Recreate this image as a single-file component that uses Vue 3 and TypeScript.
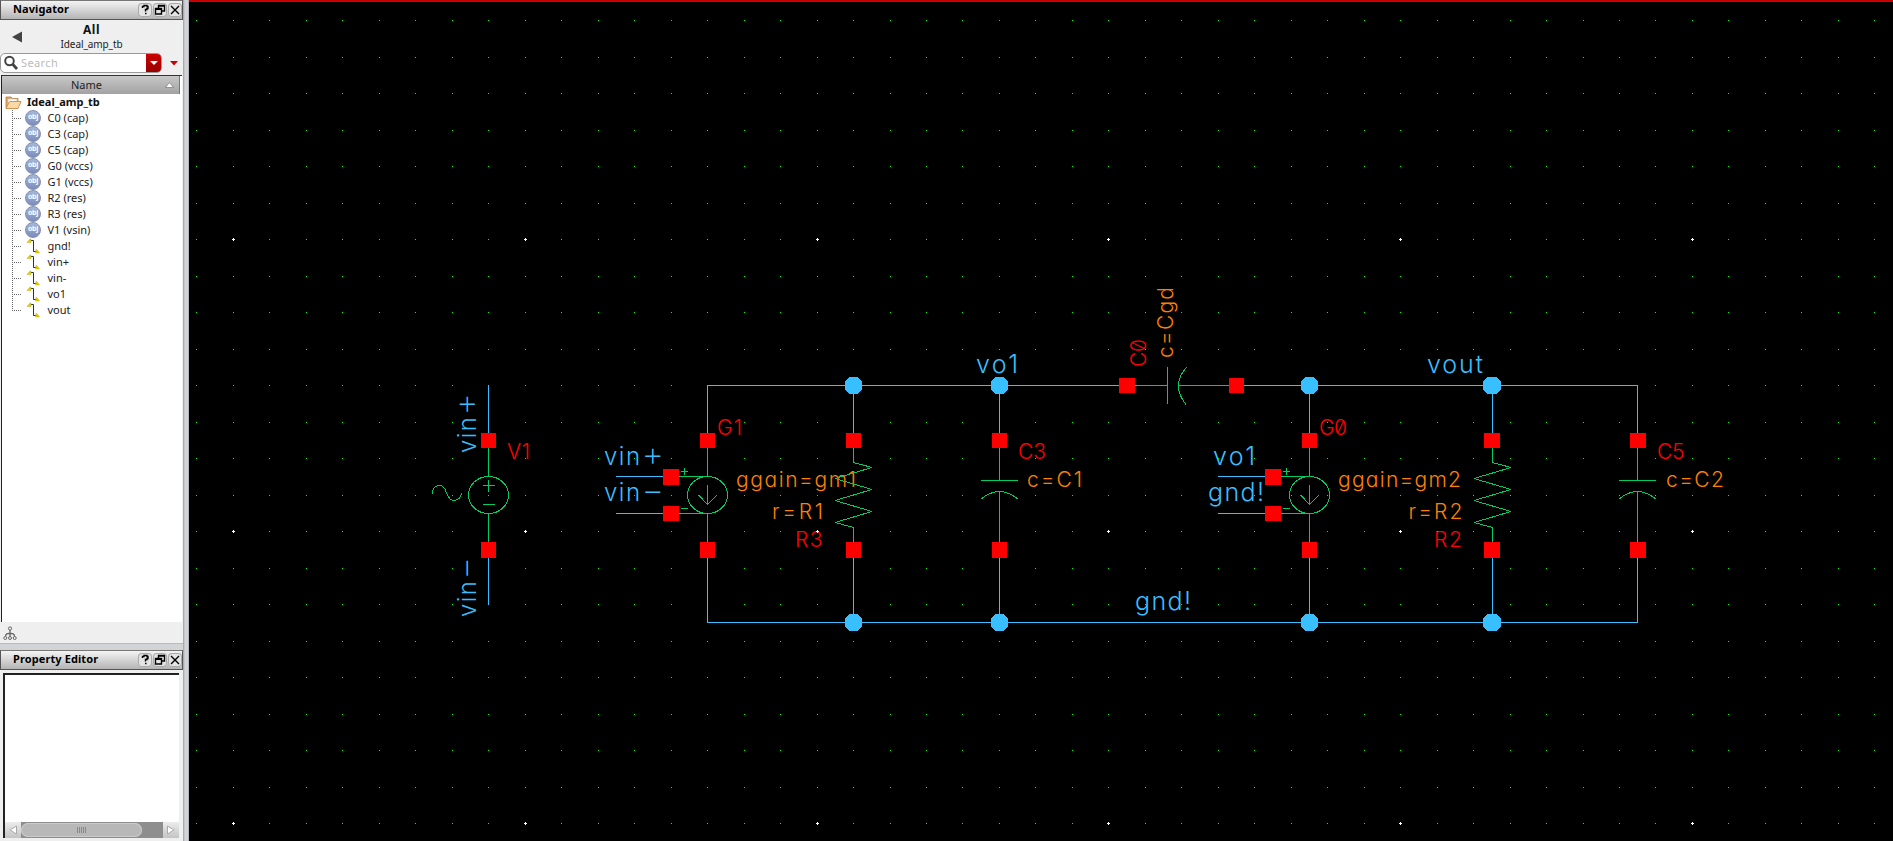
<script setup lang="ts">
type Kind = 'obj' | 'net'
interface Row { name: string; kind: Kind }
interface Label { t: string; x: number; y: number; w: number; c: string; s: number; r?: boolean; sign?: string }

const rows: Row[] = [
  { name: 'C0 (cap)', kind: 'obj' },
  { name: 'C3 (cap)', kind: 'obj' },
  { name: 'C5 (cap)', kind: 'obj' },
  { name: 'G0 (vccs)', kind: 'obj' },
  { name: 'G1 (vccs)', kind: 'obj' },
  { name: 'R2 (res)', kind: 'obj' },
  { name: 'R3 (res)', kind: 'obj' },
  { name: 'V1 (vsin)', kind: 'obj' },
  { name: 'gnd!', kind: 'net' },
  { name: 'vin+', kind: 'net' },
  { name: 'vin-', kind: 'net' },
  { name: 'vo1', kind: 'net' },
  { name: 'vout', kind: 'net' },
]

const dots: { x: number; y: number; major: boolean }[] = []
for (let i = -1; i <= 45; i++) {
  for (let j = 0; j <= 22; j++) {
    dots.push({
      x: Math.round(232.97 + 36.475 * i),
      y: 20 + Math.ceil(36.5 * j),
      major: i % 8 === 0 && (j + 2) % 8 === 0,
    })
  }
}

const labels: Label[] = [
  { t: 'vin', x: 476, y: 453, w: 36, c: 'net', s: 24, r: true, sign: '+' },
  { t: 'vin', x: 476, y: 617, w: 36, c: 'net', s: 24, r: true, sign: '−' },
  { t: 'V1', x: 507, y: 458.5, w: 23, c: 'inst', s: 21 },
  { t: 'vin', x: 604, y: 465, w: 36, c: 'net', s: 24, sign: '+' },
  { t: 'vin', x: 604, y: 501, w: 36, c: 'net', s: 24, sign: '−' },
  { t: 'G1', x: 717, y: 435, w: 25, c: 'inst', s: 21 },
  { t: 'ggain=gm1', x: 736, y: 486.5, w: 120, c: 'prop', s: 21 },
  { t: 'r=R1', x: 772, y: 519, w: 51, c: 'prop', s: 21 },
  { t: 'R3', x: 795, y: 547, w: 27.5, c: 'inst', s: 21 },
  { t: 'vo1', x: 976, y: 373, w: 42, c: 'net', s: 25 },
  { t: 'C0', x: 1146, y: 367, w: 28, c: 'inst', s: 21, r: true },
  { t: 'c=Cgd', x: 1173, y: 358, w: 71, c: 'prop', s: 21, r: true },
  { t: 'C3', x: 1018, y: 459, w: 28, c: 'inst', s: 21 },
  { t: 'c=C1', x: 1027, y: 486.5, w: 55, c: 'prop', s: 21 },
  { t: 'gnd!', x: 1135, y: 610, w: 56, c: 'net', s: 25 },
  { t: 'vo1', x: 1213, y: 465, w: 42, c: 'net', s: 25 },
  { t: 'gnd!', x: 1208, y: 501, w: 56, c: 'net', s: 25 },
  { t: 'G0', x: 1319, y: 435, w: 28, c: 'inst', s: 21 },
  { t: 'ggain=gm2', x: 1338, y: 486.5, w: 123, c: 'prop', s: 21 },
  { t: 'r=R2', x: 1408.5, y: 519, w: 54, c: 'prop', s: 21 },
  { t: 'R2', x: 1434, y: 547, w: 28, c: 'inst', s: 21 },
  { t: 'vout', x: 1427, y: 373, w: 56, c: 'net', s: 25 },
  { t: 'C5', x: 1657, y: 459, w: 27.5, c: 'inst', s: 21 },
  { t: 'c=C2', x: 1666, y: 486.5, w: 58, c: 'prop', s: 21 },
]

// [x, y, width, height] of every terminal
const pins: number[][] = [
  [481, 433, 15, 15], [481, 542, 15, 16],
  [700, 433, 15, 15], [700, 542, 15, 16], [663, 469, 16, 16], [663, 506, 16, 15],
  [846, 433, 15, 15], [846, 542, 15, 16],
  [992, 433, 15, 15], [992, 542, 15, 16],
  [1119, 378, 16, 15], [1229, 378, 15, 15],
  [1302, 433, 15, 15], [1302, 542, 15, 16], [1265, 469, 16, 16], [1265, 506, 16, 15],
  [1484, 433, 16, 15], [1484, 542, 16, 16],
  [1630, 433, 16, 15], [1630, 542, 16, 16],
]

const junctions: number[][] = [853.5, 999.5, 1309.5, 1492].flatMap((x) => [[x, 385.5], [x, 622.5]])
const octagon = (x: number, y: number): string => {
  const a = 8.7
  const b = 4
  return [[-b, -a], [b, -a], [a, -b], [a, b], [b, a], [-b, a], [-a, b], [-a, -b]]
    .map(([dx, dy]) => `${x + dx},${y + dy}`)
    .join(' ')
}
</script>

<template>
  <div class="app">
    <aside class="side">
      <section class="nav">
        <div class="title">
          <span class="caption">Navigator</span>
          <span class="btn"><svg width="14" height="14"><path d="M4.5 5V3.5H6V2.5H9V3.5H10V5.5H9V6.5H7.5V8.5M7 10.5H8.5" /></svg></span>
          <span class="btn"><svg width="14" height="14"><path d="M5.5 5V2.5H11.5V8H9M5 3H12" /><path d="M2.5 5.5H8.5V11H2.5ZM2 6.2H9" /></svg></span>
          <span class="btn"><svg width="14" height="14"><path d="M3 3L11 11M11 3L3 11" /></svg></span>
        </div>
        <div class="scope">
          <svg class="back" width="10" height="12"><path d="M0 6L10 0.5V11.5Z" fill="#444" /></svg>
          <div class="names"><b>All</b><span>Ideal_amp_tb</span></div>
        </div>
        <div class="searchline">
          <div class="search">
            <svg width="16" height="16" class="lens"><circle cx="6.5" cy="6" r="4.3" fill="none" stroke="#444" stroke-width="2" /><path d="M9.5 9L14 14" stroke="#444" stroke-width="2.8" /></svg>
            <span class="ph">Search</span>
            <span class="drop"><svg width="8" height="4"><path d="M0 0H8L4 4Z" fill="#fff" /></svg></span>
          </div>
          <svg class="filter" width="8" height="5"><path d="M0 0H8L4 4.5Z" fill="#c00" /></svg>
        </div>
        <div class="tree">
          <div class="head">
            <span>Name</span>
            <svg width="9" height="6"><path d="M0.5 5.5L4.5 0.5L8.5 5.5Z" fill="#fff" stroke="#777" stroke-width="0.7" /></svg>
          </div>
          <div class="root">
            <svg width="17" height="15">
              <path d="M1 13V2H6L7.5 3.5H13V6" fill="#e8a860" stroke="#b87830" stroke-width="0.8" />
              <path d="M3 4H12V9H3Z" fill="#fff" stroke="#bbb" stroke-width="0.6" />
              <path d="M1 13.5L4.5 6.5H16L13 13.5Z" fill="#fbd8a4" stroke="#c88a44" stroke-width="0.9" />
            </svg>
            <b>Ideal_amp_tb</b>
          </div>
          <div class="rows">
            <div v-for="r in rows" :key="r.name" class="row">
              <span class="stem"></span>
              <span v-if="r.kind === 'obj'" class="obj">obj</span>
              <svg v-else class="wireicon" width="16" height="16">
                <path d="M6 2.5H8.5V13.5H11" fill="none" stroke="#333" />
                <path d="M2 4.5L5 1H6V4.5ZM10.500 15L11 11.500H12L14.500 15Z" fill="#e6d000" stroke="#a89a20" stroke-width="0.4" />
              </svg>
              <span class="label">{{ r.name }}</span>
            </div>
          </div>
        </div>
        <div class="foot">
          <svg width="14" height="15" fill="#eee" stroke="#666">
            <path d="M7 4V11M2.500 10.500C2.500 7 5 7.500 7 7.500S11.500 7 11.500 10.500" fill="none" stroke-width="1.300" />
            <circle cx="7" cy="2.500" r="1.600" /><circle cx="2.300" cy="12" r="1.500" /><circle cx="7" cy="12" r="1.500" /><circle cx="11.700" cy="12" r="1.500" />
          </svg>
        </div>
      </section>
      <section class="props">
        <div class="title">
          <span class="caption">Property Editor</span>
          <span class="btn"><svg width="14" height="14"><path d="M4.5 5V3.5H6V2.5H9V3.5H10V5.5H9V6.5H7.5V8.5M7 10.5H8.5" /></svg></span>
          <span class="btn"><svg width="14" height="14"><path d="M5.5 5V2.5H11.5V8H9M5 3H12" /><path d="M2.5 5.5H8.5V11H2.5ZM2 6.2H9" /></svg></span>
          <span class="btn"><svg width="14" height="14"><path d="M3 3L11 11M11 3L3 11" /></svg></span>
        </div>
        <div class="sheet">
          <div class="scroll">
            <span class="arrow"><svg width="8" height="10"><path d="M7.500 1V9L1 5Z" /></svg></span>
            <span class="track"><span class="thumb"><i></i><i></i><i></i><i></i><i></i></span></span>
            <span class="arrow"><svg width="8" height="10"><path d="M0.500 1V9L7 5Z" /></svg></span>
          </div>
        </div>
      </section>
    </aside>
    <div class="sash"></div>
    <main class="canvas">
      <svg width="1704" height="839" viewBox="189 2 1704 839">
        <g v-for="(l, i) in labels" :key="i" :transform="l.r ? `rotate(-90 ${l.x} ${l.y})` : undefined">
          <text :class="['lbl', l.c]" :x="l.x" :y="l.y" :font-size="l.s" :textLength="l.w">{{ l.t }}</text>
          <text v-if="l.sign" :class="['lbl', l.c, 'sign']" :x="l.x + 37.4" :y="l.y + 1" font-size="35">{{ l.sign }}</text>
        </g>
        <g shape-rendering="crispEdges">
          <template v-for="(d, i) in dots" :key="i">
            <path v-if="d.major" :d="`M${d.x - 1} ${d.y + 0.5}h3M${d.x + 0.5} ${d.y - 1}v3`" stroke="#fff" />
            <rect v-else :x="d.x" :y="d.y" width="1" height="1" fill="#00ff00" />
          </template>
        </g>
        <g class="wire">
          <path d="M488.5 385V433M488.5 558V605" />
          <path d="M707.5 433V385.500H1119M1244 385.500H1637.500V433" />
          <path d="M707.5 558V622.500H1637.500V558" />
          <path d="M853.500 385V433M853.500 558V622M999.500 385V433M999.500 558V622M1309.500 385V433M1309.500 558V622M1492.500 385V433M1492.500 558V622" />
          <path d="M616 476.500H663M616 513.500H663M1218 476.500H1265M1218 513.500H1265" />
        </g>
        <g class="dev">
          <path d="M488.500 448V476M488.500 514V542M483 485.500H495M488.500 480V492M483 504.500H495" />
          <ellipse cx="488.500" cy="495" rx="20" ry="18.500" />
          <path d="M432.500 494C432.500 489 435 485.500 439.500 485.500C444 485.500 445 489 446.500 493C448 497 450 500.500 454 500.500C458 500.500 461.500 497 461.500 493" />
          <g v-for="dx in [0, 602]" :key="dx" :transform="`translate(${dx} 0)`">
            <path d="M707.500 448V476M707.500 514V542M679 476.500H712M679 513.500H712M681 471.500H688M684.500 468V475M681 508.500H688" />
            <path d="M707.500 485V504M698.500 495L707.500 504.500L717 495" />
            <ellipse cx="707.500" cy="495" rx="20" ry="18.500" />
          </g>
          <path v-for="x in [853.500, 1492.500]" :key="x" :d="`M${x} 448V462.500L${x + 18.5} 467.500L${x - 18.5} 478.500L${x + 18.5} 489.500L${x - 18.5} 500.500L${x + 18.5} 511.500L${x - 18.5} 522.500L${x} 527.500V542`" />
          <path v-for="x in [999.500, 1637.500]" :key="x" :d="`M${x} 448V480M${x - 18.5} 480.500H${x + 18.5}M${x - 18.5} 499Q${x - 9} 491.500 ${x} 491.500T${x + 19} 499.500M${x} 491V542`" />
          <path d="M1135 385.500H1167M1167.500 367V404M1187 367Q1178.500 375.500 1178.500 385.500T1186 404.500M1178 385.500H1229" />
        </g>
        <g shape-rendering="crispEdges">
          <rect v-for="(p, i) in pins" :key="i" :x="p[0]" :y="p[1]" :width="p[2]" :height="p[3]" fill="#f00" />
        </g>
        <polygon v-for="(n, i) in junctions" :key="i" :points="octagon(n[0], n[1])" fill="#38bfff" shape-rendering="crispEdges" />
        <rect x="488" y="495" width="1" height="1" fill="#00ff00" />
      </svg>
    </main>
  </div>
</template>

<style>
body { margin: 0; overflow: hidden; }
</style>

<style scoped>
.app { display: flex; width: 1893px; height: 841px; background: #000; font-family: "Noto Sans", "Open Sans", sans-serif; font-size: 11px; color: #222; }
.side { width: 183px; height: 841px; display: flex; flex-direction: column; background: #efefef; }
.sash { width: 6px; background: linear-gradient(90deg, #a9abb2 0 1px, #c4c6cc 1px 2px, #d2d3d7 2px 5px, #b4b5ba 5px); }
.nav { height: 644px; border-bottom: 1px solid #b8babf; box-sizing: border-box; display: flex; flex-direction: column; }
.title { height: 20px; box-sizing: border-box; border: 1px solid #555; border-top-color: #777; background: linear-gradient(#f4f4f4, #b4b4b4); display: flex; align-items: center; gap: 1px; padding: 0 0 1px 12px; }
.caption { flex: 1; font-weight: 700; font-size: 11px; letter-spacing: 0.1px; color: #000; white-space: nowrap; padding-bottom: 2px; }
.btn { width: 14px; height: 14px; box-sizing: border-box; display: flex; align-items: center; justify-content: center; border-radius: 4px; background: #e4e4e4; box-shadow: inset 0 0 0 1px #aaa; }
.btn svg { flex: none; fill: none; stroke: #000; stroke-width: 1.4; }
.scope { height: 33px; display: flex; align-items: center; background: #efefef; }
.back { margin-left: 12px; }
.names { flex: 1; margin-right: 22px; padding-bottom: 2px; display: flex; flex-direction: column; align-items: center; }
.names b { font-size: 12px; line-height: 16px; letter-spacing: 0.5px; color: #111; }
.names span { font-size: 10px; line-height: 12px; letter-spacing: -0.1px; }
.searchline { height: 22px; display: flex; align-items: flex-start; }
.search { width: 162px; height: 20px; box-sizing: border-box; border: 1px solid #999; border-radius: 5px; background: #fff; display: flex; align-items: center; overflow: hidden; }
.lens { margin-left: 2px; flex: none; }
.ph { flex: 1; margin-left: 2px; padding-bottom: 1px; letter-spacing: 0.4px; color: #bbb; }
.drop { width: 15px; height: 18px; background: linear-gradient(#c00, #900); display: flex; align-items: center; justify-content: center; }
.filter { margin: 8px 0 0 8px; }
.tree { height: 547px; margin: 0 1px 0 1px; box-sizing: border-box; border-top: 1px solid #333; border-left: 1px solid #222; background: #fff; }
.head { height: 18px; width: 178px; box-sizing: border-box; background: linear-gradient(#c8c8c8, #a2a2a2); display: flex; align-items: center; border-right: 1px solid #777; }
.head span { flex: 1; text-align: center; padding: 0 0 2px 6px; }
.head svg { margin-right: 5px; }
.root { height: 16px; display: flex; align-items: center; color: #111; }
.root svg { margin-left: 3px; }
.root b { margin-left: 5px; padding-bottom: 2px; }
.rows { margin-left: 10px; }
.row { height: 16px; display: flex; align-items: center; }
.stem { width: 13px; height: 16px; background: repeating-linear-gradient(90deg, #666 0 1px, transparent 1px 2px) 0 8px / 10px 1px no-repeat, repeating-linear-gradient(#666 0 1px, transparent 1px 2px) 0 0 / 1px 16px no-repeat; }
.row:last-child .stem { background-size: 10px 1px, 1px 9px; }
.obj { width: 16px; height: 16px; border-radius: 50%; box-sizing: border-box; border: 1px solid #7f8fb4; background: linear-gradient(#a9b7d6, #7a8dba); color: #fff; font-size: 7px; font-weight: 700; letter-spacing: -0.3px; line-height: 12px; text-align: center; }
.label { margin-left: 6.500px; padding-bottom: 2px; white-space: nowrap; }
.foot { flex: 1; display: flex; align-items: center; padding: 1px 0 0 3px; }
.props { margin-top: 6px; flex: 1; display: flex; flex-direction: column; box-shadow: 0 -6px #d2d3d7; }
.sheet { margin: 3px 4px 3px 3px; flex: 1; box-sizing: border-box; border-top: 2px solid #222; border-left: 2px solid #222; background: #fff; display: flex; flex-direction: column; justify-content: flex-end; }
.scroll { height: 16px; display: flex; }
.arrow { width: 16px; background: linear-gradient(#ececec, #c4c4c4); display: flex; align-items: center; justify-content: center; }
.arrow path { fill: #fff; stroke: #aaa; }
.track { flex: 1; background: #8e8e8e; }
.thumb { width: 121px; height: 14px; margin-top: 1px; border-radius: 8px; background: #b8b8b8; box-shadow: inset 0 0 0 1px #cacaca; display: flex; align-items: center; justify-content: center; gap: 1px; }
.thumb i { width: 1px; height: 6px; background: #888; }
.canvas { width: 1704px; height: 841px; box-sizing: border-box; border-top: 2px solid #c00; background: #000; }
.canvas svg { display: block; }
.lbl { font-family: Inter, "DejaVu Sans", sans-serif; font-weight: 300; font-feature-settings: "zero", "cv11"; }
.lbl.sign { font-weight: 200; }
.lbl.net { fill: #38bfff; }
.inst { fill: #f00; }
.prop { fill: #ff8000; }
.wire { fill: none; stroke: #38bfff; stroke-width: 1; shape-rendering: crispEdges; }
.dev { fill: none; stroke: #00cc66; stroke-width: 1; stroke-linejoin: bevel; shape-rendering: crispEdges; }
</style>
